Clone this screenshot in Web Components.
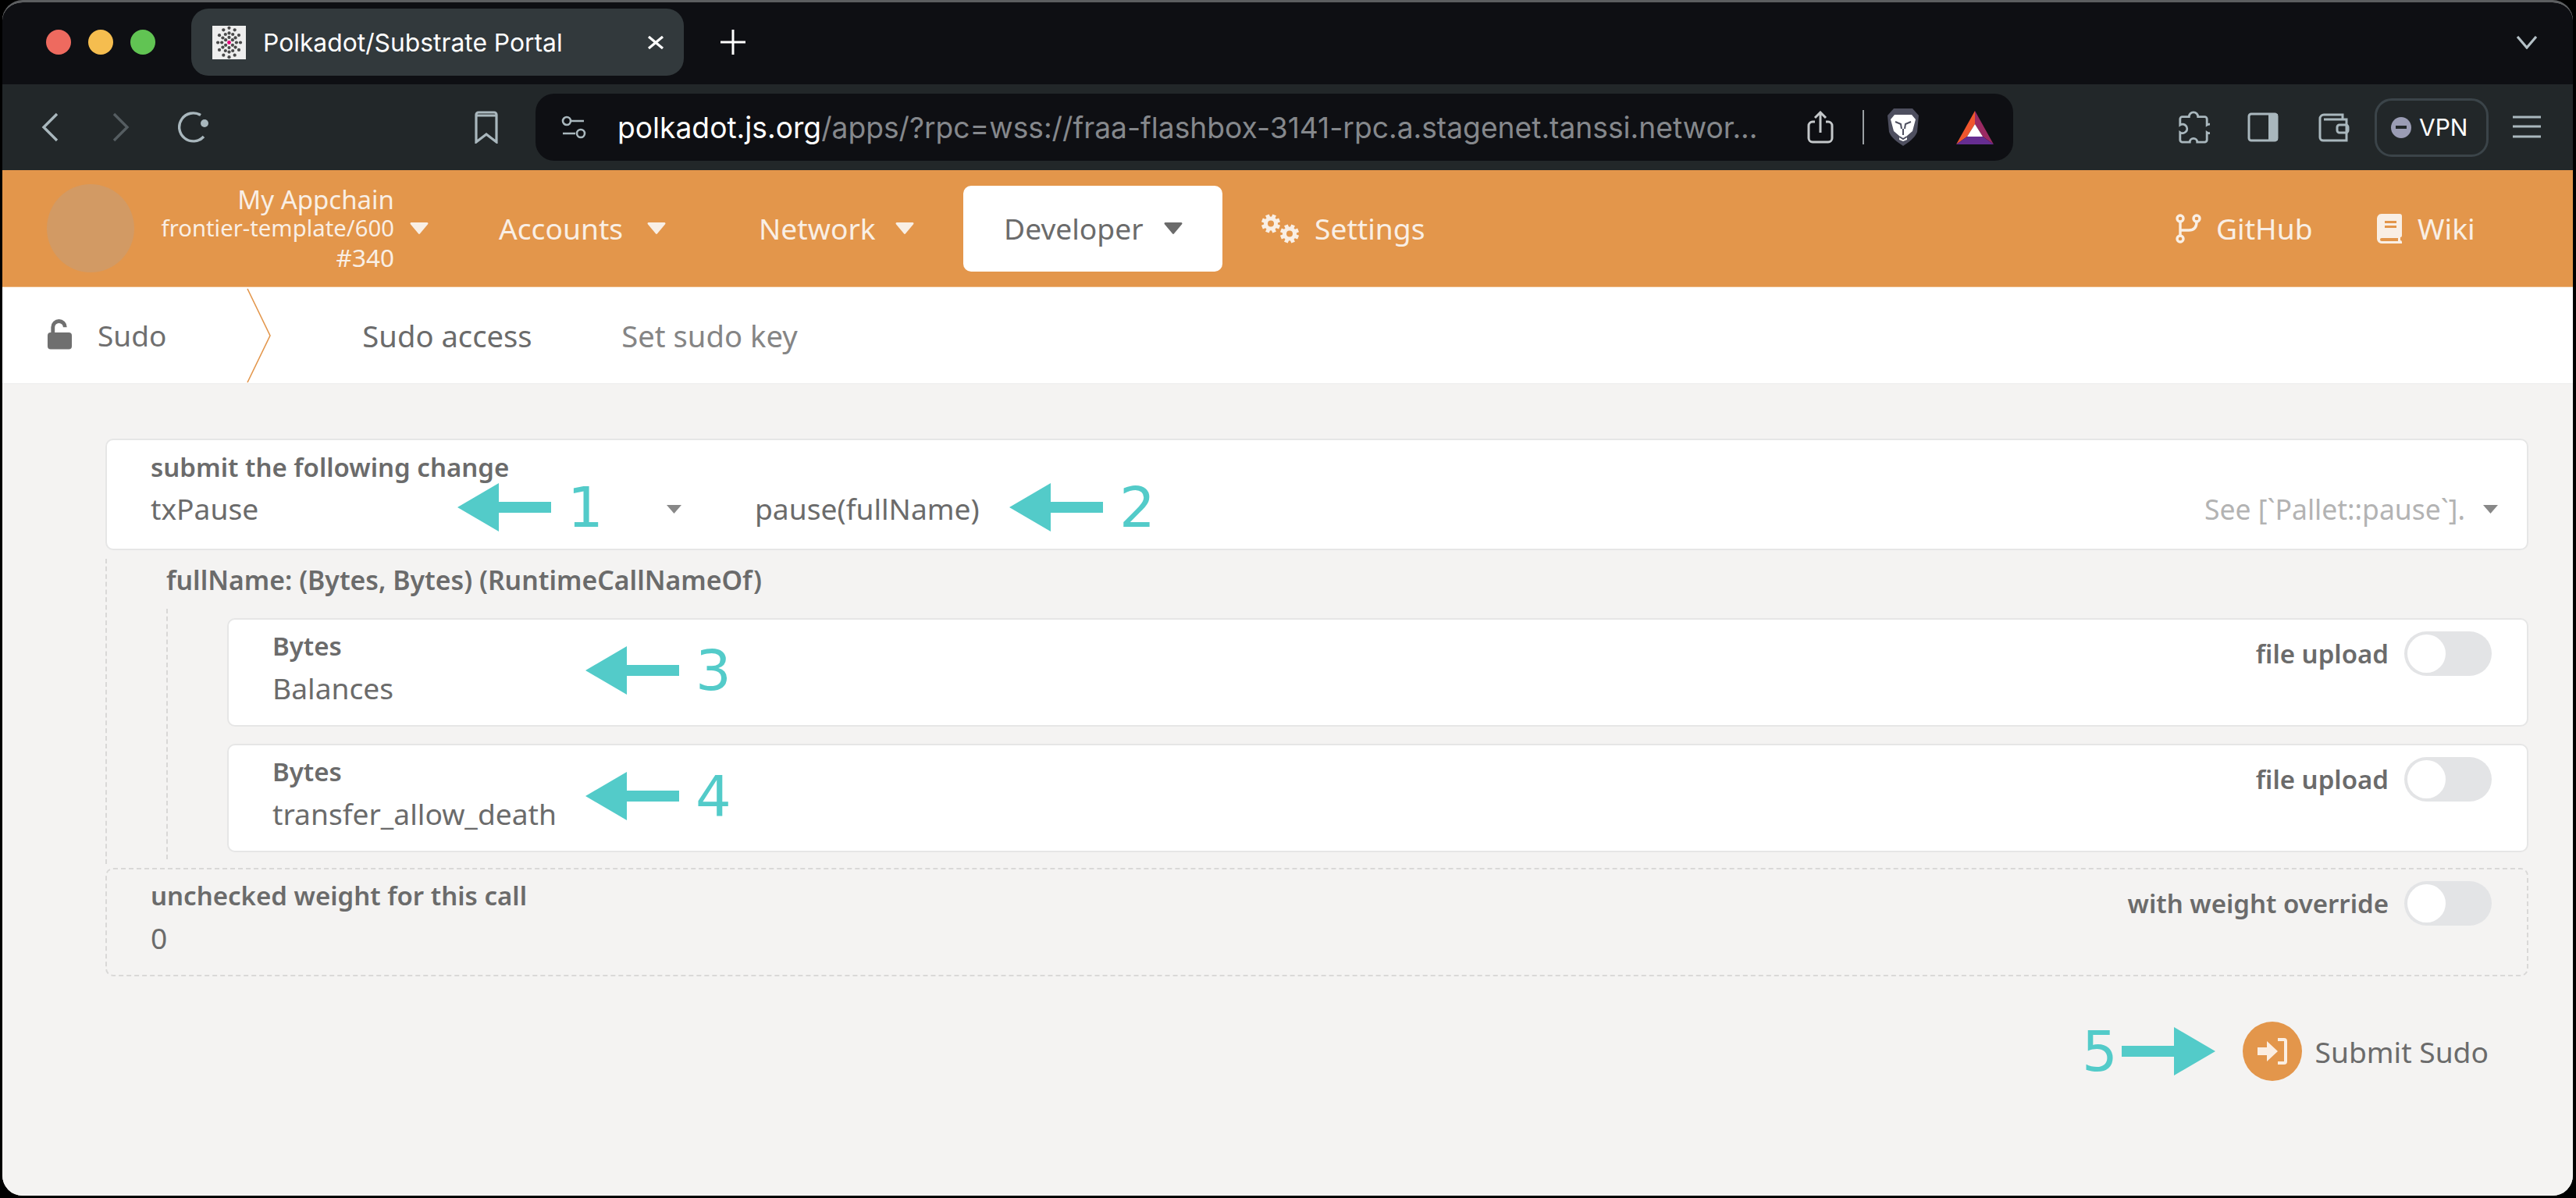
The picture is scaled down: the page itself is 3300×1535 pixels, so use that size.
<!DOCTYPE html>
<html>
<head>
<meta charset="utf-8">
<title>Polkadot/Substrate Portal</title>
<style>
  html, body { margin: 0; padding: 0; background: #000; }
  body { width: 3300px; height: 1535px; overflow: hidden; }
</style>
</head>
<body>
<app-window>
  <browser-tabs></browser-tabs>
  <browser-toolbar></browser-toolbar>
  <portal-nav></portal-nav>
  <portal-subnav></portal-subnav>
  <portal-page></portal-page>
</app-window>

<script>
const CARET = `<svg class="c" width="24" height="15" viewBox="0 0 22 14"><path d="M1.5 0h19a1.2 1.2 0 0 1 .9 2L12 13.4a1.3 1.3 0 0 1-2 0L.6 2A1.2 1.2 0 0 1 1.5 0z" fill="currentColor"/></svg>`;

// one cog of the settings icon
function gear(cx, cy, r) {
    let teeth = '';
    for (let i = 0; i < 4; i++) {
        const a = i * Math.PI / 4 + Math.PI / 8;
        const dx = Math.cos(a) * r, dy = Math.sin(a) * r;
        teeth += `<path d="M${(cx - dx).toFixed(1)} ${(cy - dy).toFixed(1)}L${(cx + dx).toFixed(1)} ${(cy + dy).toFixed(1)}" stroke="currentColor" stroke-width="5"/>`;
    }
    return `${teeth}<circle cx="${cx}" cy="${cy}" r="${r - 3}" fill="currentColor"/><circle cx="${cx}" cy="${cy}" r="${r / 3}" fill="#e3964b"/>`;
}

class AppWindow extends HTMLElement {
    constructor() {
        super();
        this.attachShadow({ mode: 'open' });
    }
    connectedCallback() {
        this.shadowRoot.innerHTML = `
            <style>
                :host {
                    display: flex;
                    flex-direction: column;
                    width: 3293px;
                    height: 1532px;
                    margin-left: 3px;
                    box-sizing: border-box;
                    border-top: 3px solid #5c5e60;
                    border-radius: 26px;
                    overflow: hidden;
                    background: #f4f3f2;
                }
            </style>
            <slot></slot>
        `;
    }
}

class BrowserTabs extends HTMLElement {
    constructor() {
        super();
        this.attachShadow({ mode: 'open' });
    }
    connectedCallback() {
        // favicon dots, rings around the middle like the portal logo
        let dots = '';
        const rings = [[6, 6], [11, 12], [17, 12]];
        rings.forEach(([r, n]) => {
            for (let i = 0; i < n; i++) {
                const a = i / n * Math.PI * 2 + Math.PI / 2;
                dots += `<circle cx="${(21.5 + r * 0.85 * Math.cos(a)).toFixed(1)}" cy="${(21.5 + r * 1.1 * Math.sin(a)).toFixed(1)}" r="2.1" fill="#4a4a4a"/>`;
            }
        });
        this.shadowRoot.innerHTML = `
            <style>
                :host {
                    display: flex;
                    align-items: center;
                    flex: none;
                    height: 105px;
                    padding: 0 0 3px 56px;
                    box-sizing: border-box;
                    background: #0e0f13;
                    font-family: Inter, "Liberation Sans", sans-serif;
                    color: #fff;
                }
                .lights { display: flex; gap: 22px; margin-right: 46px; }
                .lights i { width: 32px; height: 32px; border-radius: 50%; }
                .tab {
                    display: flex;
                    align-items: center;
                    width: 631px;
                    height: 86px;
                    box-sizing: border-box;
                    padding: 0 25px 0 27px;
                    background: #32393c;
                    border-radius: 22px;
                    font-size: 31.8px;
                }
                .tab svg.fav { margin-right: 22px; background: #eee; }
                .tab span { flex: 1; white-space: nowrap; }
                .plus { margin-left: 47px; }
                .chev { margin-left: auto; margin-right: 45px; }
            </style>
            <div class="lights">
                <i style="background:#ee6a5f"></i>
                <i style="background:#f5bd4f"></i>
                <i style="background:#61c453"></i>
            </div>
            <div class="tab">
                <svg class="fav" width="43" height="43" viewBox="0 0 43 43">${dots}<circle cx="21.5" cy="21.5" r="2.4" fill="#e6007a"/></svg>
                <span>Polkadot/Substrate Portal</span>
                <svg width="22" height="17" viewBox="0 0 22 17"><path d="M2 1l18 15M20 1L2 16" stroke="#fff" stroke-width="3.2" fill="none"/></svg>
            </div>
            <svg class="plus" width="32" height="32" viewBox="0 0 32 32"><path d="M16 0v32M0 16h32" stroke="#fff" stroke-width="3"/></svg>
            <svg class="chev" width="28" height="17" viewBox="0 0 28 17"><path d="M2 1l12 14L26 1" stroke="#b4c0c6" stroke-width="3.2" fill="none"/></svg>
        `;
    }
}

class BrowserToolbar extends HTMLElement {
    constructor() {
        super();
        this.attachShadow({ mode: 'open' });
    }
    connectedCallback() {
        this.shadowRoot.innerHTML = `
            <style>
                :host {
                    display: flex;
                    align-items: center;
                    height: 110px;
                    flex: none;
                    background: #222729;
                    font-family: Inter, "Liberation Sans", sans-serif;
                    color: #a9b7bd;
                }
                svg { display: block; flex: none; }
                .back { margin-left: 48px; }
                .fwd { margin-left: 65px; }
                .reload { margin-left: 58px; }
                .mark { margin-left: 338px; }
                .addr {
                    display: flex;
                    align-items: center;
                    width: 1893px;
                    height: 86px;
                    margin-left: 48px;
                    box-sizing: border-box;
                    padding: 0 25px 0 33px;
                    background: #0e0f13;
                    border-radius: 24px;
                    font-size: 37.2px;
                }
                .url { flex: 1; margin-left: 40px; white-space: nowrap; color: #85888c; }
                .url b { font-weight: 400; color: #fff; }
                .sep { width: 2px; height: 44px; background: #9aa0a3; margin: 0 28px 0 37px; }
                .right { display: flex; align-items: center; margin-left: 210px; }
                .vpn {
                    display: flex;
                    align-items: center;
                    gap: 10px;
                    width: 146px;
                    height: 75px;
                    box-sizing: border-box;
                    padding-left: 18px;
                    margin-left: 32px;
                    border: 3px solid #3b4449;
                    border-radius: 22px;
                    color: #fff;
                    font-size: 30px;
                }
                .vpn i { width: 26px; height: 27px; border-radius: 50%; background: #9a9cb4; display: flex; align-items: center; justify-content: center; }
                .vpn i::after { content: ""; width: 14px; height: 4px; background: #222729; }
            </style>
            <svg class="back" width="26" height="38" viewBox="0 0 26 38"><path d="M22 2L5 19l17 17" stroke="#a9b7bd" stroke-width="3.4" fill="none"/></svg>
            <svg class="fwd" width="26" height="38" viewBox="0 0 26 38"><path d="M4 2l17 17L4 36" stroke="#555d61" stroke-width="3.4" fill="none"/></svg>
            <svg class="reload" width="44" height="40" viewBox="0 0 44 40"><path d="M31 4.5A18 18 0 1 0 35 32" stroke="#a9b7bd" stroke-width="3.4" fill="none"/><circle cx="36" cy="15" r="5" fill="#a9b7bd"/></svg>
            <svg class="mark" width="30" height="42" viewBox="0 0 30 42"><path d="M2 40V5a3 3 0 0 1 3-3h20a3 3 0 0 1 3 3v35L15 30z" stroke="#a9b7bd" stroke-width="3.2" fill="none"/><path d="M2 6h26" stroke="#a9b7bd" stroke-width="3"/></svg>
            <div class="addr">
                <svg width="32" height="30" viewBox="0 0 32 30"><circle cx="7" cy="7" r="5" stroke="#a9b7bd" stroke-width="2.6" fill="none"/><path d="M13 7h16M2 23h16" stroke="#a9b7bd" stroke-width="2.6"/><circle cx="25" cy="23" r="5" stroke="#a9b7bd" stroke-width="2.6" fill="none"/></svg>
                <span class="url"><b>polkadot.js.org</b>/apps/?rpc=wss://fraa-flashbox-3141-rpc.a.stagenet.tanssi.networ...</span>
                <svg width="34" height="42" viewBox="0 0 34 42"><path d="M10 14H7a5 5 0 0 0-5 5v16a5 5 0 0 0 5 5h20a5 5 0 0 0 5-5V19a5 5 0 0 0-5-5h-3M17 28V3M10 9l7-7 7 7" stroke="#c4c8ca" stroke-width="3" fill="none"/></svg>
                <span class="sep"></span>
                <svg width="44" height="50" viewBox="0 0 44 50"><path d="M10 1h24l8 9-2 21c-2 7-12 14-18 18C16 45 6 38 4 31L2 10z" fill="#4e4f5f"/><path d="M11 9h22l5 6-4 15-7 6v5l-5 2-5-2v-5l-7-6-4-15z" fill="#fff"/><path d="M12 18l7 3 1 6M32 18l-7 3-1 6M22 27v8M17 37l5 3 5-3" stroke="#4e4f5f" stroke-width="2" fill="none"/></svg>
                <svg style="margin-left:46px" width="48" height="43" viewBox="0 0 48 43"><path d="M24 0L0 43l14-10 10-16z" fill="#f0562e"/><path d="M24 0l24 43-14-10-10-16z" fill="#9b2a63"/><path d="M0 43h48L34 33H14z" fill="#662d91"/><path d="M24 17L14 33h20z" fill="#fff"/></svg>
            </div>
            <div class="right">
                <svg width="42" height="42" viewBox="0 0 42 44"><path d="M15 8a6 6 0 1 1 12 0h9a3 3 0 0 1 3 3v8a6 6 0 1 1 0 10v10a3 3 0 0 1-3 3H26a5 5 0 0 0-10 0H6a3 3 0 0 1-3-3V29a6 6 0 1 0 0-10v-8a3 3 0 0 1 3-3z" stroke="#a9b7bd" stroke-width="3" fill="none"/></svg>
                <svg style="margin-left:48px" width="40" height="38" viewBox="0 0 40 38"><rect x="2" y="2" width="36" height="34" rx="3" stroke="#a9b7bd" stroke-width="3" fill="none"/><rect x="27" y="2" width="12" height="34" fill="#a9b7bd"/></svg>
                <svg style="margin-left:51px" width="40" height="38" viewBox="0 0 40 38"><path d="M2 8a5 5 0 0 1 5-5h24v6M2 8v24a4 4 0 0 0 4 4h30V9H7" stroke="#a9b7bd" stroke-width="3" fill="none"/><rect x="24" y="16" width="14" height="10" rx="3" stroke="#a9b7bd" stroke-width="3" fill="none"/></svg>
                <div class="vpn"><i></i>VPN</div>
                <svg style="margin-left:31px" width="36" height="30" viewBox="0 0 36 30"><path d="M0 2h36M0 14h36M0 27h36" stroke="#a9b7bd" stroke-width="3"/></svg>
            </div>
        `;
    }
}

class PortalNav extends HTMLElement {
    constructor() {
        super();
        this.attachShadow({ mode: 'open' });
    }
    connectedCallback() {
        this.shadowRoot.innerHTML = `
            <style>
                :host {
                    display: flex;
                    align-items: center;
                    flex: none;
                    height: 150px;
                    background: #e3964b;
                    border-bottom: 1px solid #ecb67f;
                    box-sizing: border-box;
                    font-family: "Noto Sans", Lato, sans-serif;
                    font-size: 37.2px;
                    color: #f9efe5;
                }
                svg { display: block; flex: none; }
                .logo { width: 112px; height: 113px; border-radius: 50%; background: #d29a64; margin-left: 57px; flex: none; }
                .chain {
                    width: 333px;
                    text-align: right;
                    font-size: 29.3px;
                    line-height: 37px;
                    white-space: nowrap;
                }
                .chain .big { font-size: 33px; }
                .chain .num { font-size: 31.5px; }
                .chain-caret { margin-left: 20px; flex: none; }
                a {
                    display: flex;
                    align-items: center;
                    justify-content: space-between;
                    flex: none;
                    color: inherit;
                    text-decoration: none;
                    white-space: nowrap;
                }
                .acc { margin-left: 90px; width: 214px; }
                .net { margin-left: 119px; width: 199px; }
                .dev {
                    margin-left: 63px;
                    width: 332px;
                    height: 110px;
                    box-sizing: border-box;
                    padding: 0 51px 0 52px;
                    background: #fff;
                    border-radius: 10px;
                    color: #6b6b6b;
                }
                .set { margin-left: 50px; justify-content: flex-start; }
                .set svg { margin-right: 20px; }
                .gh { margin-left: auto; width: 173px; justify-content: flex-start; }
                .gh svg { margin-right: 19px; }
                .wk { margin-left: 84px; margin-right: 128px; width: 124px; justify-content: flex-start; }
                .wk svg { margin-right: 19px; }
            </style>
            <div class="logo"></div>
            <div class="chain">
                <div class="big">My Appchain</div>
                <div>frontier-template/600</div>
                <div class="num">#340</div>
            </div>
            <span class="chain-caret">${CARET}</span>
            <a class="acc" href="#">Accounts${CARET}</a>
            <a class="net" href="#">Network${CARET}</a>
            <a class="dev" href="#">Developer${CARET}</a>
            <a class="set" href="#"><svg width="48" height="38" viewBox="0 0 48 38">${gear(12, 12.5, 12)}${gear(36, 25.5, 12)}</svg>Settings</a>
            <a class="gh" href="#"><svg width="33" height="38" viewBox="0 0 33 38"><g stroke="currentColor" stroke-width="3.4" fill="none"><circle cx="6" cy="6" r="4"/><circle cx="27" cy="6" r="4"/><circle cx="6" cy="32" r="4"/><path d="M6 10v18M27 10c0 8-4 11-10 11H6"/></g></svg>GitHub</a>
            <a class="wk" href="#"><svg width="34" height="38" viewBox="0 0 32 38"><path fill-rule="evenodd" d="M6 0h23a3 3 0 0 1 3 3v25a2 2 0 0 1-2 2v4a2 2 0 0 1 2 2v2H6a6 6 0 0 1-6-6V6a6 6 0 0 1 6-6zM10 9v3h15V9zM10 15v3h15v-3zM6 31a2 2 0 0 0 0 4h21v-4z" fill="currentColor"/></svg>Wiki</a>
        `;
    }
}

class PortalSubnav extends HTMLElement {
    constructor() {
        super();
        this.attachShadow({ mode: 'open' });
    }
    connectedCallback() {
        this.shadowRoot.innerHTML = `
            <style>
                :host {
                    display: flex;
                    align-items: center;
                    flex: none;
                    position: relative;
                    height: 124px;
                    background: #fff;
                    border-bottom: 1px solid #eeeded;
                    box-sizing: border-box;
                    font-family: "Noto Sans", Lato, sans-serif;
                    font-size: 38.2px;
                }
                .title { display: flex; align-items: center; margin-left: 57px; width: 403px; color: #6f6f6f; flex: none; font-size: 37px; }
                .title svg { margin-right: 32px; margin-top: -2px; }
                .chevron { position: absolute; left: 313px; top: 0; }
                .tab { position: relative; height: 100%; width: 220px; display: flex; align-items: center; justify-content: center; white-space: nowrap; flex: none; }
                .tab.on { color: #6b6b6b; }
                .tab.on::after {
                    content: "";
                    position: absolute;
                    left: 51px;
                    bottom: -6px;
                    width: 118px;
                    height: 5px;
                    background: #e3964b;
                }
                .tab.off { margin-left: 115px; width: 222px; color: #858585; }
            </style>
            <div class="title">
                <svg width="33" height="39" viewBox="0 0 34 39"><path d="M5 17h24a4 4 0 0 1 4 4v14a4 4 0 0 1-4 4H5a4 4 0 0 1-4-4V21a4 4 0 0 1 4-4z" fill="#6f6f6f"/><path d="M8 19V10a8 8 0 0 1 16 0" stroke="#6f6f6f" stroke-width="5" fill="none"/></svg>
                Sudo
            </div>
            <svg class="chevron" width="32" height="124" viewBox="0 0 32 124"><path d="M1 2l29 60L1 122" stroke="#e3964b" stroke-width="1.6" fill="none"/></svg>
            <div class="tab on">Sudo access</div>
            <div class="tab off">Set sudo key</div>
        `;
    }
}

// a labelled white box, value slotted in, optional toggle on the right
class ParamCard extends HTMLElement {
    constructor() {
        super();
        this.attachShadow({ mode: 'open' });
    }
    connectedCallback() {
        const label = this.getAttribute('label');
        const toggle = this.getAttribute('toggle');
        this.shadowRoot.innerHTML = `
            <style>
                :host {
                    display: block;
                    position: relative;
                    height: 139px;
                    box-sizing: border-box;
                    padding: 14px 0 0 56px;
                    background: #fff;
                    border: 2px solid #e6e6e6;
                    border-radius: 10px;
                }
                :host([dashed]) {
                    background: transparent;
                    border: 2px dashed #d9d8d7;
                }
                .label { font-weight: 600; font-size: 33px; line-height: 40px; color: #6b6b6b; white-space: nowrap; }
                .value { margin-top: 10px; font-size: 37.2px; line-height: 48px; color: #6b6b6b; }
                .toggle {
                    position: absolute;
                    top: 15px;
                    right: 45px;
                    display: flex;
                    align-items: center;
                    gap: 20px;
                    font-weight: 600;
                    font-size: 33px;
                    color: #6b6b6b;
                }
                .toggle i {
                    display: block;
                    position: relative;
                    width: 112px;
                    height: 57px;
                    border-radius: 29px;
                    background: #e3e4e6;
                }
                .toggle i::after {
                    content: "";
                    position: absolute;
                    left: 4px;
                    top: 4px;
                    width: 49px;
                    height: 49px;
                    border-radius: 50%;
                    background: #fff;
                }
            </style>
            <div class="label">${label}</div>
            <div class="value"><slot></slot></div>
            ${toggle ? `<div class="toggle">${toggle}<i></i></div>` : ''}
        `;
    }
}

// teal annotation: a number and an arrow
class ArrowMark extends HTMLElement {
    constructor() {
        super();
        this.attachShadow({ mode: 'open' });
    }
    connectedCallback() {
        const dir = this.getAttribute('dir') || 'left';
        const flip = dir === 'right' ? ' style="transform:scaleX(-1)"' : '';
        this.shadowRoot.innerHTML = `
            <style>
                :host {
                    display: flex;
                    align-items: center;
                    gap: 21px;
                    position: absolute;
                    font-family: "DejaVu Sans", sans-serif;
                    font-size: 72px;
                    line-height: 1;
                    color: #53cbc9;
                }
                :host([dir="right"]) { flex-direction: row-reverse; gap: 5px; }
            </style>
            <svg${flip} width="120" height="62" viewBox="0 0 120 62"><path d="M0 31L53 0v24h67v14H53v24z" fill="#53cbc9"/></svg>
            <span>${this.getAttribute('n')}</span>
        `;
    }
}

class PortalPage extends HTMLElement {
    constructor() {
        super();
        this.attachShadow({ mode: 'open' });
    }
    connectedCallback() {
        this.shadowRoot.innerHTML = `
            <style>
                :host {
                    display: block;
                    position: relative;
                    flex: 1;
                    padding: 70px 57px 0 132px;
                    background: #f4f3f2;
                    font-family: "Noto Sans", Lato, sans-serif;
                    color: #6b6b6b;
                }
                .head {
                    height: 143px;
                    box-sizing: border-box;
                    padding: 15px 0 0 56px;
                    background: #fff;
                    border: 2px solid #e6e6e6;
                    border-radius: 10px;
                }
                .head .label { font-weight: 600; font-size: 33px; line-height: 40px; }
                .row { display: flex; align-items: center; margin-top: 9px; font-size: 37.2px; line-height: 48px; white-space: nowrap; }
                .row .module { width: 661px; }
                .caret { color: #888; }
                .caret svg { display: block; }
                .row .method { margin-left: 94px; flex: 1; }
                .row .doc { color: #b3b3b3; font-size: 35.5px; margin-right: 23px; }
                .row .last { margin-right: 37px; }
                .params {
                    margin: 11px 0 5px;
                    border-left: 2px dashed #d9d8d7;
                    height: 391px;
                    box-sizing: border-box;
                }
                .title { margin-left: 76px; font-weight: 600; font-size: 33.800px; line-height: 54px; height: 64px; white-space: nowrap; }
                .inner {
                    margin-left: 76px;
                    padding: 12px 0 9px 76px;
                    border-left: 2px dashed #d9d8d7;
                    display: flex;
                    flex-direction: column;
                    gap: 22px;
                }
                .submit {
                    display: flex;
                    align-items: center;
                    justify-content: flex-end;
                    gap: 17px;
                    margin-top: 58px;
                    margin-right: 51px;
                    font-size: 37.2px;
                    white-space: nowrap;
                }
                .round {
                    width: 76px;
                    height: 76px;
                    border-radius: 50%;
                    background: #e3964b;
                    display: flex;
                    align-items: center;
                    justify-content: center;
                }
            </style>
            <div class="head">
                <div class="label">submit the following change</div>
                <div class="row">
                    <span class="module">txPause</span>
                    <span class="caret"><svg width="19" height="11" viewBox="0 0 19 11"><path d="M0 0h19L9.500 11z" fill="currentColor"/></svg></span>
                    <span class="method">pause(fullName)</span>
                    <span class="doc">See [\`Pallet::pause\`].</span>
                    <span class="caret last"><svg width="19" height="11" viewBox="0 0 19 11"><path d="M0 0h19L9.500 11z" fill="currentColor"/></svg></span>
                </div>
            </div>
            <div class="params">
                <div class="title">fullName: (Bytes, Bytes) (RuntimeCallNameOf)</div>
                <div class="inner">
                    <param-card label="Bytes" toggle="file upload">Balances</param-card>
                    <param-card label="Bytes" toggle="file upload">transfer_allow_death</param-card>
                </div>
            </div>
            <param-card dashed label="unchecked weight for this call" toggle="with weight override">0</param-card>
            <div class="submit">
                <span class="round"><svg width="38" height="34" viewBox="0 0 38 34"><path d="M0 12h12V4l14 13-14 13v-8H0z" fill="#fbeee2"/><path d="M26 2h8a2 2 0 0 1 2 2v26a2 2 0 0 1-2 2h-8" stroke="#fbeee2" stroke-width="4" fill="none"/></svg></span>
                Submit Sudo
            </div>
            <arrow-mark n="1" style="left:583px;top:122px"></arrow-mark>
            <arrow-mark n="2" style="left:1290px;top:122px"></arrow-mark>
            <arrow-mark n="3" style="left:747px;top:331px"></arrow-mark>
            <arrow-mark n="4" style="left:747px;top:492px"></arrow-mark>
            <arrow-mark n="5" dir="right" style="left:2664px;top:819px"></arrow-mark>
        `;
    }
}

customElements.define('app-window', AppWindow);
customElements.define('browser-tabs', BrowserTabs);
customElements.define('browser-toolbar', BrowserToolbar);
customElements.define('portal-nav', PortalNav);
customElements.define('portal-subnav', PortalSubnav);
customElements.define('param-card', ParamCard);
customElements.define('arrow-mark', ArrowMark);
customElements.define('portal-page', PortalPage);
</script>
</body>
</html>
